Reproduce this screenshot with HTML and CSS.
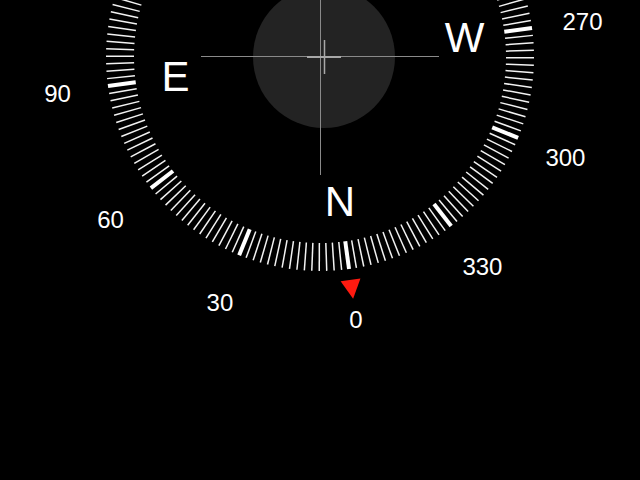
FILE: index.html
```html
<!DOCTYPE html>
<html lang="en">

<head>
    <meta charset="UTF-8">
    <meta name="viewport" content="width=device-width, initial-scale=1.0">
    <title>Compass</title>
    <link rel="stylesheet" href="styles.css">
</head>

<body>

    <div class="compass">
        <svg id="dial" width="640" height="480" viewBox="0 0 640 480">
            <!-- level bubble and crosshair -->
            <circle class="bubble" cx="324" cy="57" r="71"></circle>
            <line class="cross" x1="201" y1="56.5" x2="439" y2="56.5"></line>
            <line class="cross" x1="320.5" y1="0" x2="320.5" y2="175"></line>
            <line class="cross-small" x1="307" y1="57" x2="341" y2="57"></line>
            <line class="cross-small thin" x1="324.5" y1="40" x2="324.5" y2="74"></line>

            <g id="ring" transform="translate(320 57) rotate(172.2)">
                <polygon class="pointer" points="-10,-225 10,-225 0,-244"></polygon>
            </g>
            <g id="labels"></g>
        </svg>
    </div>

    <script>
        const cx = 320;
        const cy = 57;
        const rotation = 172.2;
        const ns = 'http://www.w3.org/2000/svg';
        const ring = document.getElementById('ring');
        const labels = document.getElementById('labels');

        // tick marks every 2 degrees, heavy ones every 30
        for (let d = 0; d < 360; d += 2) {
            const line = document.createElementNS(ns, 'line');
            line.setAttribute('x1', 0);
            line.setAttribute('y1', -186);
            line.setAttribute('x2', 0);
            line.setAttribute('y2', -214);
            line.setAttribute('transform', 'rotate(' + d + ')');
            line.setAttribute('class', d % 30 === 0 ? 'tick major' : 'tick');
            ring.appendChild(line);
        }

        function place(text, deg, radius, cls) {
            const a = (deg - 90 + rotation) * Math.PI / 180;
            const x = cx + radius * Math.cos(a);
            const y = cy + radius * Math.sin(a);
            // labels that fall off the screen are not drawn
            if (y < 0 || x < 0 || x > 640) {
                return;
            }
            const t = document.createElementNS(ns, 'text');
            t.setAttribute('x', x.toFixed(1));
            t.setAttribute('y', y.toFixed(1));
            t.setAttribute('class', cls);
            t.textContent = text;
            labels.appendChild(t);
        }

        for (let d = 0; d < 360; d += 30) {
            place(String(d), d, 265, 'degree');
        }

        place('N', 0, 146, 'cardinal');
        place('E', 90, 146, 'cardinal');
        place('S', 180, 146, 'cardinal');
        place('W', 270, 146, 'cardinal');
    </script>

</body>

</html>
```

FILE: styles.css
```css
body {
    margin: 0;
    padding: 0;
    background-color: #000;
    font-family: 'Liberation Sans', 'Helvetica', sans-serif;
    overflow: hidden;
}

.compass {
    width: 640px;
    height: 480px;
}

#dial {
    display: block;
}

.bubble {
    fill: #232323;
}

.cross {
    stroke: #8a8a8a;
    stroke-width: 1;
}

.cross-small {
    stroke: #a8a8a8;
    stroke-width: 2;
}

.cross-small.thin {
    stroke-width: 1.5;
}

.tick {
    stroke: #f2f2f2;
    stroke-width: 1.5;
}

.tick.major {
    stroke: #fff;
    stroke-width: 4;
}

.pointer {
    fill: #ff1a10;
}

.degree {
    fill: #fff;
    font-size: 24px;
    text-anchor: middle;
    dominant-baseline: central;
}

.cardinal {
    fill: #fff;
    font-size: 42px;
    text-anchor: middle;
    dominant-baseline: central;
}
```
